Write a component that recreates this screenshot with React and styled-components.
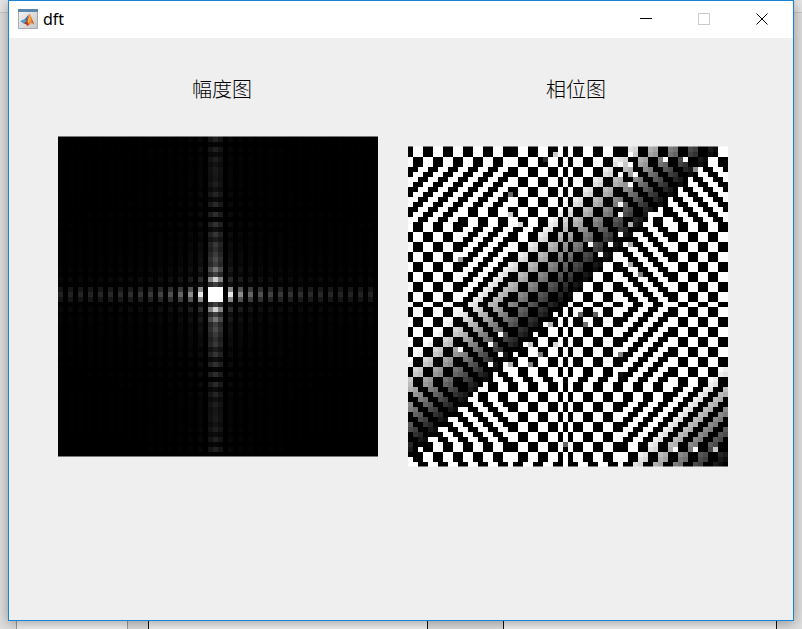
import React from 'react';
import styled, { createGlobalStyle } from 'styled-components';

const N = 64;
const CENTER = 31;
const CELL = 5;
const SIDE = N * CELL;

const Global = createGlobalStyle`
  * { box-sizing: border-box; }
  body { margin: 0; background: #dcdcdc; overflow: hidden; }
`;

const Desktop = styled.div`
  display: grid;
  grid-template-rows: 1fr 8px;
  min-height: 100vh;
  background: linear-gradient(#e6e6e6 12px, #c8c8c8 12px, #c8c8c8 13px, #dedede 13px);
`;

const Window = styled.main`
  display: flex;
  flex-direction: column;
  margin: 0 8px;
  border: 1px solid #1883d7;
  background: #efefef;
  box-shadow: 0 2px 12px rgba(0, 0, 0, 0.35);
  z-index: 1;
`;

const TitleBar = styled.header`
  display: flex;
  align-items: flex-start;
  height: 37px;
  padding: 0 2px 0 9px;
  background: #fff;
`;

const AppIcon = styled.svg`
  margin-top: 8px;
`;

const Title = styled.h1`
  flex: 1;
  margin: 8px 0 0 5px;
  font: 400 16px/20px 'Noto Sans', sans-serif;
  color: #000;
`;

const WindowButton = styled.button`
  display: grid;
  place-items: center;
  width: 58px;
  height: 36px;
  padding: 0;
  border: 0;
  background: transparent;
  color: ${(p) => (p.disabled ? '#cccccc' : '#000')};
`;

const Figure = styled.div`
  display: flex;
  gap: 30px;
  padding: 39px 49px;
`;

const Axes = styled.figure`
  display: flex;
  flex-direction: column;
  gap: ${(p) => p.$gap}px;
  margin: 0;
`;

const AxesTitle = styled.figcaption`
  padding-left: ${(p) => p.$indent}px;
  font: 300 20px/24px 'Noto Sans CJK SC', sans-serif;
  color: #000;
`;

const Plot = styled.svg`
  display: block;
  width: 320px;
  height: 321px;
`;

const BackgroundStrip = styled.div`
  display: grid;
  grid-template-columns: 16px 112px 20px 280px 75px 274px 1fr;
`;

const Pane = styled.div`
  background: ${(p) => (p.$light ? '#f2f2f2' : 'transparent')};
  border: solid ${(p) => p.$edge || 'transparent'};
  border-width: 0 ${(p) => (p.$edge ? 1 : 0)}px;
`;

function MatlabIcon() {
  return (
    <AppIcon width="20" height="20" viewBox="0 0 20 20" aria-hidden="true">
      <defs>
        <linearGradient id="iconFace" x1="0" y1="0" x2="1" y2="1">
          <stop offset="0" stopColor="#f6f6f6" />
          <stop offset="1" stopColor="#c4c4c4" />
        </linearGradient>
        <linearGradient id="iconPeak" x1="0" y1="0" x2="1" y2="0">
          <stop offset="0" stopColor="#7a2a20" />
          <stop offset="0.4" stopColor="#d8431c" />
          <stop offset="0.6" stopColor="#f5a03a" />
          <stop offset="1" stopColor="#a8301c" />
        </linearGradient>
      </defs>
      <rect x="0.5" y="0.5" width="19" height="19" fill="url(#iconFace)" stroke="#a9adb2" />
      <rect x="0" y="0" width="20" height="3" fill="#5b86ad" />
      <path d="M2.5 12.2L7 10l3.6-4.6-1.6 6.2-3 3z" fill="#2f6fae" />
      <path d="M2.5 12.2L7 10l1.2 1.6-2.2 3z" fill="#4fa3cf" />
      <path d="M6 14.6l2.4-2.4 3-7.6c1.2.3 2.8 6.6 5 10.8-1.6-1.4-2.6-1.6-3.6-.8-1 .8-2 2.2-3.4 2.4-.8-1.2-2-2.2-3.4-2.4z" fill="url(#iconPeak)" />
      <path d="M9.6 12.5l1.9-7 .8 4.5-1.5 5z" fill="#f7b04a" />
    </AppIcon>
  );
}

const wave = (k, len) =>
  k === 0 ? len : Math.sin((Math.PI * k * len) / N) / Math.sin((Math.PI * k) / N);

const grid = (fn) =>
  Array.from({ length: N }, (_, r) =>
    Array.from({ length: N }, (_, c) => fn(c - CENTER, r - CENTER)));

const gray = (v) => Math.round(255 * Math.min(1, Math.max(0, v)));

const amplitude = grid((kx, ky) => gray(Math.abs(wave(kx, 32) * wave(ky, 34)) / 255));

function spectrumSign(kx, ky) {
  const u = Math.abs(kx);
  const v = Math.abs(ky);
  if (u % 2 === 1 || u === 0) {
    const column = u === 0 || u % 4 === 3 ? 1 : -1;
    const row = (v % 2 ? -1 : 1) * (wave(v, 34) >= 0 ? 1 : -1);
    return column * row;
  }
  const sign = (u % 4 === 2) === (v % 4 === 0 || v % 4 === 3) ? -1 : 1;
  const flipped = v % 2 === 0
    ? u <= (v <= 18 ? 21 : 10)
    : (u <= 11 && v <= 14) || (u > 11 && v >= 29);
  return flipped ? -sign : sign;
}

const phase = grid((kx, ky) => {
  const slope = (-Math.PI * (kx + ky)) / N;
  if (spectrumSign(kx, ky) > 0) return gray(slope);
  return gray(slope > 0 ? slope - Math.PI : slope + Math.PI);
});

// Bins where the spectrum is close to zero and the phase is noisy: [column, row, level].
const noisyBins = [
  [27, 2, 46], [29, 1, 204], [20, 9, 102], [20, 13, 200], [10, 22, 153], [22, 15, 215],
  [42, 3, 255], [42, 5, 255], [44, 1, 255], [44, 3, 255], [44, 7, 255], [51, 2, 255],
  [55, 2, 255], [45, 5, 255], [42, 11, 255], [42, 13, 255], [42, 17, 255], [48, 13, 255],
  [57, 4, 140], [44, 15, 180], [44, 19, 170], [44, 23, 170], [46, 25, 130],
  [36, 19, 255], [40, 19, 255], [38, 21, 255],
  [18, 37, 255], [16, 39, 255], [10, 40, 255], [18, 41, 255], [16, 43, 255],
  [28, 35, 180], [26, 41, 120], [24, 43, 130], [20, 43, 180], [24, 39, 200], [29, 39, 215],
  [31, 59, 100], [42, 41, 130], [42, 45, 16], [34, 33, 96], [37, 33, 96], [35, 35, 112],
  [53, 60, 255], [57, 60, 255], [61, 60, 200],
];
noisyBins.forEach(([c, r, level]) => { phase[r][c] = level; });

function Heatmap({ cells, label }) {
  const levels = new Map();
  const add = (value, d) => levels.set(value, (levels.get(value) || '') + d);
  cells.forEach((row, r) => row.forEach((value, c) => {
    add(value, `M${c * CELL} ${r * CELL + (r ? 1 : 0)}h${CELL}v${r ? CELL : CELL + 1}h-${CELL}z`);
  }));
  return (
    <Plot viewBox={`0 0 ${SIDE} ${SIDE + 1}`} role="img" aria-label={label} shapeRendering="crispEdges">
      {[...levels].map(([v, d]) => <path key={v} d={d} fill={`rgb(${v},${v},${v})`} />)}
      <path d={`M0 0h${SIDE}v1h-${SIDE}zM0 ${SIDE}h${SIDE}v1h-${SIDE}z`} fill="#efefef" fillOpacity="0.5" />
    </Plot>
  );
}

export default function App() {
  return (
    <>
      <Global />
      <Desktop>
        <Window>
          <TitleBar>
            <MatlabIcon />
            <Title>dft</Title>
            <WindowButton aria-label="Minimize">
              <svg width="12" height="12" aria-hidden="true">
                <path d="M0 5.5h12" stroke="currentColor" />
              </svg>
            </WindowButton>
            <WindowButton aria-label="Maximize" disabled>
              <svg width="12" height="12" aria-hidden="true">
                <rect x="0.5" y="0.5" width="11" height="11" fill="none" stroke="currentColor" />
              </svg>
            </WindowButton>
            <WindowButton aria-label="Close">
              <svg width="12" height="12" aria-hidden="true">
                <path d="M0.5 0.5l11 11M11.5 0.5l-11 11" stroke="currentColor" />
              </svg>
            </WindowButton>
          </TitleBar>
          <Figure>
            <Axes $gap={35}>
              <AxesTitle $indent={134}>幅度图</AxesTitle>
              <Heatmap cells={amplitude} label="幅度图" />
            </Axes>
            <Axes $gap={45}>
              <AxesTitle $indent={138}>相位图</AxesTitle>
              <Heatmap cells={phase} label="相位图" />
            </Axes>
          </Figure>
        </Window>
        <BackgroundStrip>
          <Pane />
          <Pane $light $edge="#9a9a9a" />
          <Pane />
          <Pane $light $edge="#111" />
          <Pane />
          <Pane $light $edge="#111" />
          <Pane />
        </BackgroundStrip>
      </Desktop>
    </>
  );
}
